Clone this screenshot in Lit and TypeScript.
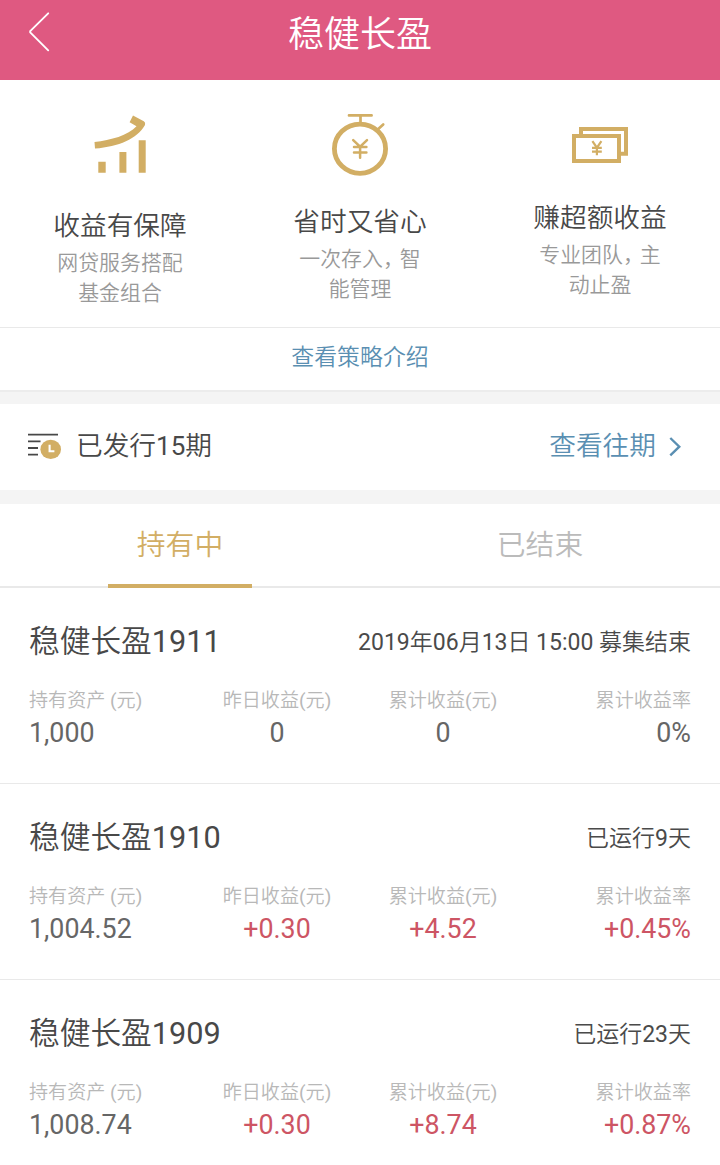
import { LitElement, html, css, svg } from "lit";
import { customElement, property } from "lit/decorators.js";

interface Holding {
  name: string;
  status: string;
  values: string[];
  gain: boolean;
}

const holdings: Holding[] = [
  { name: "稳健长盈1911", status: "2019年06月13日 15:00 募集结束", values: ["1,000", "0", "0", "0%"], gain: false },
  { name: "稳健长盈1910", status: "已运行9天", values: ["1,004.52", "+0.30", "+4.52", "+0.45%"], gain: true },
  { name: "稳健长盈1909", status: "已运行23天", values: ["1,008.74", "+0.30", "+8.74", "+0.87%"], gain: true },
];

const labels = ["持有资产 (元)", "昨日收益(元)", "累计收益(元)", "累计收益率"];

// Latin runs use the regular weight beside the lighter Chinese glyphs.
const mixed = (text: string) =>
  text.split(/([0-9:()]+)/).map((part, i) => (i % 2 ? html`<span class="latin">${part}</span>` : part));

const growthIcon = svg`
  <g fill="#d2ae64">
    <path d="M0.5 28C17 26 34 21.500 42.500 12.200L35.600 8.200L39 1.500L49.800 7.200Q51.800 8.500 51 11C43 25 25 32.500 1 34.600Z"/>
    <path d="M4.300 47.700h7.400v11H4.300zM25.400 38h7v20.700h-7zM44.700 26.300h7v32.400h-7z"/>
  </g>`;

const timerIcon = svg`
  <g fill="none" stroke="#d2ae64" stroke-linecap="round">
    <ellipse cx="28" cy="34.700" rx="25.600" ry="24.600" stroke-width="4.800"/>
    <path d="M17 1.400h22.600M28.500 2v8M46 15.200l5.200-4.700" stroke-width="2.700"/>
    <path d="M21.200 26.200l6.900 6.500 6.900-6.500M22 33h12.400M22 38.600h12.400M28.100 33v10.800" stroke-width="2.500"/>
  </g>`;

const cashIcon = svg`
  <g fill="none" stroke="#d2ae64">
    <path d="M9 7.500V2h45v24.800h-6" stroke-width="4"/>
    <path d="M2 9.100h45v24.800H2z" stroke-width="4"/>
    <path d="M20.400 14.200l4.500 6.500 4.500-6.500M20 20.800h9.800M20 24.600h9.800M24.900 20.500v7.800" stroke-width="2.200"/>
  </g>`;

@customElement("holding-card")
class HoldingCard extends LitElement {
  @property({ attribute: false }) item!: Holding;

  static styles = css`
    :host {
      display: block;
      box-sizing: border-box;
      height: 196px;
      padding: 31px 29px 0;
      border-bottom: 1px solid #e9e9e9;
      background: #fff;
    }
    .latin { font-weight: 400; }
    .head {
      display: flex;
      justify-content: space-between;
      height: 48px;
      line-height: 48px;
      white-space: nowrap;
    }
    .name { font-size: 30.7px; line-height: 46px; color: #484848; }
    .status { font-size: 23px; color: #4a4a4a; }
    .stats {
      display: grid;
      grid-template-columns: 165px 166px 166px 165px;
      padding-top: 20px;
      text-align: center;
    }
    .stat:first-child { text-align: left; }
    .stat:last-child { text-align: right; }
    .label { font-size: 19.1px; line-height: 28px; color: #b8b8b8; white-space: nowrap; }
    .value { font-size: 26.8px; line-height: 36px; font-weight: 400; color: #666; }
    .gain { color: #cd5564; }
  `;

  render() {
    const { name, status, values, gain } = this.item;
    return html`
      <div class="head"><span class="name">${mixed(name)}</span><span class="status">${mixed(status)}</span></div>
      <div class="stats">
        ${labels.map((label, i) => html`
          <div class="stat">
            <div class="label">${mixed(label)}</div>
            <div class="value ${gain && i > 0 ? "gain" : ""}">${values[i]}</div>
          </div>`)}
      </div>`;
  }
}

@customElement("app-root")
class AppRoot extends LitElement {
  static styles = css`
    :host {
      display: block;
      height: 1165px;
      overflow: hidden;
      background: #fff;
      font-family: Roboto, "Noto Sans CJK SC", sans-serif;
      font-weight: 350;
    }
    svg { display: block; }
    .latin { font-weight: 400; }
    .bar {
      display: grid;
      grid-template-columns: 80px 1fr 80px;
      height: 80px;
      background: #df5981;
      color: #fff;
    }
    .back { padding: 11px 0 0 28px; }
    .title { font-size: 36px; line-height: 70px; text-align: center; }
    .features {
      display: grid;
      grid-template-columns: repeat(3, 1fr);
      height: 247px;
      border-bottom: 1px solid #e9e9e9;
      text-align: center;
    }
    .feature { display: flex; flex-direction: column; align-items: center; padding-top: 34px; }
    .growth { padding-bottom: 29px; }
    .timer { padding-bottom: 25px; }
    .cash { padding: 13px 0 33px; }
    .caption { font-size: 26.7px; line-height: 42px; color: #484848; }
    .desc { font-size: 20.9px; line-height: 30px; padding-top: 1px; color: #999; }
    .comma { letter-spacing: -4px; }
    .intro {
      height: 62px;
      line-height: 60px;
      font-size: 22.9px;
      text-align: center;
      color: #5a8fb2;
    }
    .gap { height: 14px; box-sizing: border-box; background: #f4f4f4; }
    .lined { border-top: 2px solid #ececec; }
    .issued {
      display: flex;
      align-items: center;
      height: 86px;
      padding: 0 39px 0 28px;
      font-size: 26.7px;
      line-height: 82px;
      color: #484848;
    }
    .count { flex: 1; padding-left: 14px; padding-bottom: 2px; }
    .num { font-size: 26px; }
    .past { color: #5a8fb2; padding-bottom: 2px; }
    .chevron { padding-left: 13px; }
    .tabs {
      display: grid;
      grid-template-columns: 1fr 1fr;
      box-sizing: border-box;
      height: 84px;
      border-bottom: 2px solid #e9e9e9;
      font-size: 28.8px;
      line-height: 82px;
      text-align: center;
      color: #bbb;
    }
    .active {
      justify-self: center;
      box-sizing: border-box;
      width: 144px;
      height: 84px;
      border-bottom: 4px solid #d2ae64;
      color: #d2ae64;
    }
  `;

  render() {
    return html`
      <header class="bar">
        <div class="back">
          <svg width="24" height="42" viewBox="0 0 24 42" fill="none" stroke="#fff" stroke-width="1.9" stroke-linecap="round" stroke-linejoin="round">
            <path d="M20.2 2.3L2.2 20.2v1.2L20.2 39.3" />
          </svg>
        </div>
        <div class="title">稳健长盈</div>
      </header>
      <section class="features">
        <div class="feature">
          <div class="growth"><svg width="53" height="62" viewBox="0 0 53 62">${growthIcon}</svg></div>
          <div class="caption">收益有保障</div>
          <div class="desc">网贷服务搭配<br />基金组合</div>
        </div>
        <div class="feature">
          <div class="timer"><svg width="56" height="62" viewBox="0 0 56 62">${timerIcon}</svg></div>
          <div class="caption">省时又省心</div>
          <div class="desc">一次存入<span class="comma">，</span>智<br />能管理</div>
        </div>
        <div class="feature">
          <div class="cash"><svg width="56" height="37" viewBox="0 0 56 37">${cashIcon}</svg></div>
          <div class="caption">赚超额收益</div>
          <div class="desc">专业团队<span class="comma">，</span>主<br />动止盈</div>
        </div>
      </section>
      <div class="intro">查看策略介绍</div>
      <div class="gap lined"></div>
      <section class="issued">
        <svg width="34" height="28" viewBox="0 0 34 28" fill="none">
          <path d="M0 1.700h30M0 8.400h12.500M0 15h10M0 21.700h10" stroke="#484848" stroke-width="1.800" />
          <ellipse cx="22.700" cy="16.400" rx="10.300" ry="9.600" fill="#d2ae64" />
          <path d="M21.600 11.800v6.400h4.800" stroke="#fff" stroke-width="2.100" />
        </svg>
        <div class="count">已发行<span class="num latin">15</span>期</div>
        <div class="past">查看往期</div>
        <svg class="chevron" width="12" height="20" viewBox="0 0 12 20" fill="none" stroke="#5a8fb2" stroke-width="2.4">
          <path d="M1.300 1l9 8.700L1.300 18.400" />
        </svg>
      </section>
      <div class="gap"></div>
      <nav class="tabs">
        <div class="active">持有中</div>
        <div>已结束</div>
      </nav>
      ${holdings.map((item) => html`<holding-card .item=${item}></holding-card>`)}
    `;
  }
}
